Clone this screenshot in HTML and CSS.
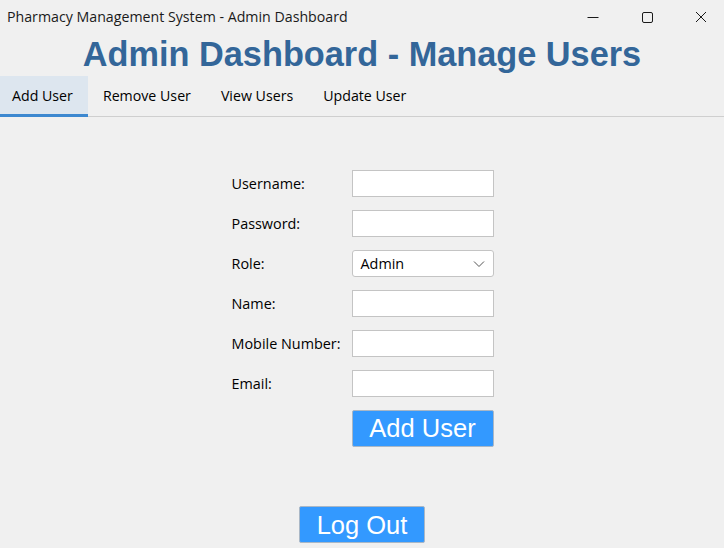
FILE: index.html
```html
<!DOCTYPE html>
<html>
<head>
<meta charset="utf-8">
<link rel="stylesheet" href="styles.css">
</head>
<body>
<div class="window">
  <div class="titlebar">
    <span class="title">Pharmacy Management System - Admin Dashboard</span>
    <div class="caption">
      <span class="cbtn"><svg width="12" height="12" viewBox="0 0 12 12"><path d="M0.5 6.5h11" stroke="#1a1a1a" stroke-width="1"/></svg></span>
      <span class="cbtn"><svg width="12" height="12" viewBox="0 0 12 12"><rect x="1.5" y="1.5" width="10" height="10" rx="1.5" fill="none" stroke="#1a1a1a" stroke-width="1"/></svg></span>
      <span class="cbtn"><svg width="12" height="12" viewBox="0 0 12 12"><path d="M1 1L11 11M11 1L1 11" stroke="#1a1a1a" stroke-width="1"/></svg></span>
    </div>
  </div>
  <h1 class="heading">Admin Dashboard - Manage Users</h1>
  <div class="tabs">
    <div class="tab active">Add User</div>
    <div class="tab">Remove User</div>
    <div class="tab">View Users</div>
    <div class="tab">Update User</div>
  </div>
  <div class="content">
    <div class="form">
      <label class="lbl">Username:</label>
      <div class="field"></div>
      <label class="lbl">Password:</label>
      <div class="field"></div>
      <label class="lbl">Role:</label>
      <div class="field select"><span>Admin</span><svg width="12" height="8" viewBox="0 0 12 8"><path d="M1 1.5L6 6.5L11 1.5" fill="none" stroke="#555" stroke-width="1"/></svg></div>
      <label class="lbl">Name:</label>
      <div class="field"></div>
      <label class="lbl">Mobile Number:</label>
      <div class="field"></div>
      <label class="lbl">Email:</label>
      <div class="field"></div>
      <span></span>
      <div class="btn add">Add User</div>
    </div>
    <div class="btn logout">Log Out</div>
  </div>
</div>
</body>
</html>
```
FILE: styles.css
```css
* { box-sizing: border-box; }
html, body { margin: 0; padding: 0; }
body {
  width: 724px;
  height: 548px;
  background: #f0f0f0;
  font-family: "Open Sans", "Noto Sans", sans-serif;
  color: #000;
  overflow: hidden;
}
.window { display: flex; flex-direction: column; height: 548px; }
.titlebar {
  height: 33px;
  display: flex;
  align-items: center;
  justify-content: space-between;
  padding-left: 7px;
  background: #f0f0f0;
}
.title { font-size: 14.2px; color: #1a1a1a; margin-top: -1px; }
.caption { display: flex; height: 33px; }
.cbtn {
  width: 46px;
  margin-left: 8px;
  height: 33px;
  display: flex;
  align-items: center;
  justify-content: center;
}
.heading {
  margin: 0;
  height: 43px;
  text-align: center;
  font-family: "Liberation Sans", Arial, sans-serif;
  font-weight: bold;
  font-size: 34.3px;
  line-height: 42px;
  color: #336699;
}
.tabs {
  display: flex;
  height: 41px;
  border-bottom: 1px solid #cfcfcf;
}
.tab {
  padding: 0 15px;
  font-size: 14.2px;
  line-height: 40px;
  height: 40px;
  color: #000;
}
.tab.active {
  background: #dde6ef;
  border-bottom: 3px solid #3c88d0;
  padding: 0 15px 0 12px;
  height: 41px;
  margin-bottom: -1px;
}
.content {
  flex: 1;
  display: flex;
  flex-direction: column;
  align-items: center;
  padding-top: 53px;
}
.form {
  display: grid;
  grid-template-columns: 120px 142px;
  row-gap: 13px;
  margin-left: 1px;
}
.lbl {
  font-size: 14.4px;
  height: 27px;
  line-height: 27px;
}
.field {
  height: 27px;
  background: #fff;
  border: 1px solid #c4c4c4;
}
.select {
  display: flex;
  align-items: center;
  justify-content: space-between;
  padding: 0 8px 0 8px;
  border-radius: 3px;
  font-size: 14.4px;
}
.btn {
  background: #3399ff;
  color: #fff;
  font-family: "Liberation Sans", Arial, sans-serif;
  font-size: 25.5px;
  border: 1px solid #a9b7c6;
  border-radius: 2px;
  text-align: center;
}
.add {
  height: 37px;
  line-height: 35px;
}
.logout {
  margin-top: 59px;
  width: 126px;
  height: 37px;
  line-height: 36px;
}
```
